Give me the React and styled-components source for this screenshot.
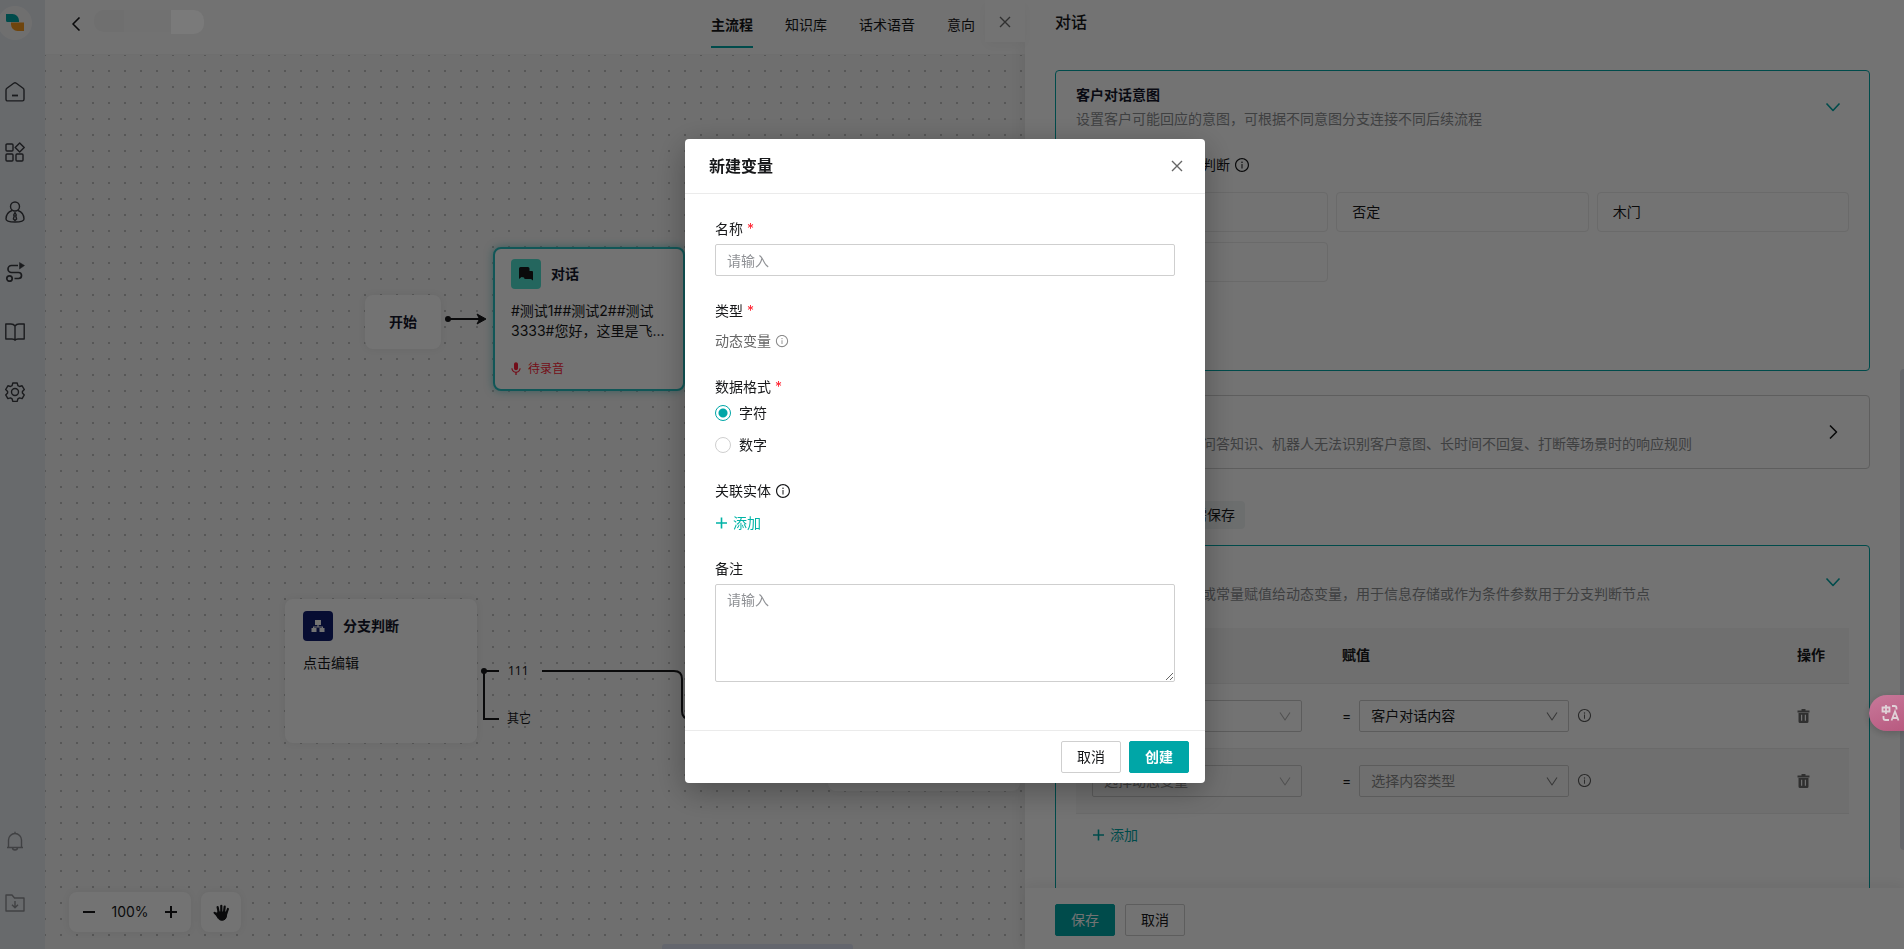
import React from "react";
import styled, { createGlobalStyle } from "styled-components";
import { AiOutlineInfoCircle } from "react-icons/ai";
import { MdMic } from "react-icons/md";

const TEAL = "#00a6a7";

const GlobalStyle = createGlobalStyle`
  *, *::before, *::after { box-sizing: border-box; }
  html, body { margin: 0; height: 100%; overflow: hidden; }
  body, button, input, select, textarea {
    font-family: Inter, "Noto Sans CJK SC", sans-serif;
    font-size: 14px;
    line-height: 20px;
    color: #17181a;
  }
  h1, h2, h3, p { margin: 0; font-size: 14px; }
  button { cursor: pointer; }
  svg { display: block; flex: none; }
`;

const Page = styled.div`
  display: flex;
  height: 100vh;
  background: #f5f5f5;
`;

/* ---------- side navigation ---------- */

const Sidebar = styled.nav`
  flex: none;
  width: 45px;
  display: flex;
  flex-direction: column;
  justify-content: space-between;
  padding: 6px 0 36px;
  background: #e6eaf0;
`;

const Logo = styled.a`
  display: flex;
  align-items: center;
  justify-content: center;
  width: 34px;
  height: 34px;
  margin-left: -2px;
  margin-bottom: 42px;
  border-radius: 50%;
  background: #f7f7f7;
`;

const NavGroup = styled.div`
  display: flex;
  flex-direction: column;
  gap: ${(p) => p.$gap}px;
`;

const NavLink = styled.a`
  display: flex;
  width: 30px;
  height: 20px;
  align-items: center;
  justify-content: center;
  color: ${(p) => (p.$muted ? "#8e9094" : "#3b3d42")};
`;

/* ---------- work area ---------- */

const Main = styled.main`
  flex: 1;
  min-width: 0;
  display: flex;
  flex-direction: column;
`;

const TopBar = styled.header`
  display: flex;
  justify-content: space-between;
  height: 55px;
  padding: 0 50px 0 25px;
  background: #fdfdfd;
  border-bottom: 1px solid #f3f3f3;
`;

const TopLeft = styled.div`
  display: flex;
  align-items: center;
  gap: 10px;
  height: 48px;
`;

const IconButton = styled.button`
  display: flex;
  align-items: center;
  justify-content: center;
  width: ${(p) => p.$size}px;
  height: ${(p) => p.$size}px;
  padding: 0;
  border: 0;
  background: none;
  color: inherit;
`;

const TitleSkeleton = styled.div`
  display: flex;
  width: 110px;
  height: 22px;
  margin-bottom: 6px;
  border-radius: 10px;
  overflow: hidden;
  background: #fafafa;
`;

const SkeletonPart = styled.span`
  width: ${(p) => p.$width}px;
  background: ${(p) => p.$color};
`;

const SkeletonEnd = styled.span`
  position: relative;
  z-index: 30;
  width: 33px;
  height: 24px;
  margin: 0 0 4px -43px;
  border-radius: 0 10px 10px 0;
  background: #7a7a7a;
`;

const Tabs = styled.nav`
  display: flex;
  gap: 32px;
`;

const Tab = styled.a`
  height: 48px;
  padding-top: 15px;
  color: #17181a;
  text-decoration: none;
  white-space: nowrap;
  font-weight: ${(p) => (p.$active ? 700 : 400)};
  border-bottom: 2px solid ${(p) => (p.$active ? TEAL : "transparent")};
`;

const Canvas = styled.section`
  position: relative;
  flex: 1;
  overflow: hidden;
  background-color: #f5f5f5;
  background-image: conic-gradient(from 90deg at 14px 14px, #c0c0c0 25%, transparent 0);
  background-size: 16px 16px;
  background-position: 1px 1px;
`;

const Wires = styled.svg`
  position: absolute;
  left: 0;
  top: 0;
`;

const Node = styled.article`
  position: absolute;
  left: ${(p) => p.$x}px;
  top: ${(p) => p.$y}px;
  width: ${(p) => p.$w || 192}px;
  height: ${(p) => p.$h || 144}px;
  padding: ${(p) => (p.$selected ? 10 : 12)}px ${(p) => (p.$selected ? 16 : 18)}px;
  border: ${(p) => (p.$selected ? "2px solid #27bfc0" : "0")};
  border-radius: 8px;
  background: #fff;
  box-shadow: ${(p) => (p.$selected ? "0 0 8px rgba(0, 166, 167, 0.5)" : "0 0 8px rgba(0, 0, 0, 0.06)")};
`;

const StartNode = styled(Node)`
  display: flex;
  align-items: center;
  justify-content: center;
  font-weight: 700;
  color: #16182b;
`;

const NodeHead = styled.div`
  display: flex;
  align-items: center;
  gap: 10px;
  margin-bottom: 12px;
  font-weight: 700;
  color: #16182b;
`;

const NodeIcon = styled.span`
  display: flex;
  align-items: center;
  justify-content: center;
  width: 30px;
  height: 30px;
  border-radius: 4px;
  background: ${(p) => p.$color};
`;

const NodeStatus = styled.div`
  display: flex;
  align-items: center;
  gap: 4px;
  margin-top: 18px;
  margin-left: -3px;
  font-size: 12px;
  color: #ff1f3a;
`;

const BranchLabel = styled.span`
  position: absolute;
  left: ${(p) => p.$x}px;
  top: ${(p) => p.$y}px;
  font-family: "Noto Sans", "Noto Sans CJK SC", sans-serif;
  font-size: 12px;
`;

const ZoomTools = styled.div`
  position: absolute;
  left: 24px;
  bottom: 17px;
  display: flex;
  gap: 10px;
`;

const ToolCard = styled.div`
  display: flex;
  align-items: center;
  justify-content: space-between;
  height: 40px;
  width: ${(p) => p.$width}px;
  padding: 0 10px;
  border-radius: 8px;
  background: #fff;
  box-shadow: 0 0 8px rgba(0, 0, 0, 0.06);
`;

const CanvasScroll = styled.div`
  position: absolute;
  left: 63%;
  bottom: 0;
  width: 191px;
  height: 5px;
  border-radius: 3px 3px 0 0;
  background: #dde2f2;
`;

/* ---------- drawer ---------- */

const Drawer = styled.aside`
  position: relative;
  flex: none;
  width: 879px;
  display: flex;
  flex-direction: column;
  background: #fff;
  box-shadow: -4px 0 12px rgba(0, 0, 0, 0.05);
`;

const DrawerClose = styled.button`
  position: absolute;
  left: -40px;
  top: 0;
  display: flex;
  align-items: center;
  justify-content: center;
  width: 40px;
  height: 42px;
  padding: 2px 0 0;
  border: 0;
  background: #fff;
  color: #6b6b6b;
  box-shadow: 0 4px 12px rgba(0, 0, 0, 0.04);
`;

const DrawerTitle = styled.h2`
  padding: 10px 30px 0;
  font-size: 16px;
  line-height: 24px;
  font-weight: 500;
`;

const DrawerBody = styled.div`
  flex: 1;
  min-height: 0;
  overflow: hidden;
  padding: 36px 34px 0 30px;
`;

const DrawerFooter = styled.footer`
  position: relative;
  display: flex;
  gap: 10px;
  padding: 16px 30px 13px;
  background: #fff;
  box-shadow: 0 -4px 12px rgba(0, 0, 0, 0.06);
`;

const DrawerScroll = styled.div`
  position: absolute;
  right: 0;
  top: 369px;
  width: 4px;
  height: 481px;
  border-radius: 4px 0 0 4px;
  background: #dde2ea;
`;

const Card = styled.section`
  padding: 14px 20px ${(p) => p.$bottom}px;
  border: 1px solid ${(p) => (p.$open ? TEAL : "#d0d0d0")};
  border-radius: 4px;
`;

const CardHead = styled.header`
  display: flex;
  align-items: center;
  justify-content: space-between;
  padding-right: 4px;
  color: ${(p) => (p.$open ? TEAL : "#17181a")};
`;

const CardTitle = styled.h3`
  margin-bottom: 4px;
  color: #16182b;
`;

const CardText = styled.p`
  color: #8c8e91;
`;

const Judge = styled.div`
  display: flex;
  align-items: center;
  gap: 4px;
  margin: 25px 0 16px;
  line-height: 22px;
`;

const IntentGrid = styled.div`
  display: grid;
  grid-template-columns: repeat(3, 1fr);
  gap: 10px 8px;
`;

const Intent = styled.div`
  height: 40px;
  padding: 9px 15px;
  border: 1px solid #eaeaea;
  border-radius: 4px;
`;

const SectionGap = styled.div`
  height: 24px;
`;

const SectionBar = styled.div`
  display: flex;
  align-items: center;
  gap: 16px;
  margin: 32px 0 16px;
`;

const Tag = styled.span`
  padding: 4px 10px;
  border-radius: 4px;
  background: #f0f4f4;
`;

const Table = styled.table`
  width: 100%;
  margin-top: 24px;
  border-collapse: collapse;
  table-layout: fixed;
  text-align: left;

  th, td {
    padding: 0 16px;
    border-bottom: 1px solid #ececec;
  }
  th { height: 55px; background: #f5f5f5; }
  td { height: 65px; }
  tbody tr:nth-child(even) { background: #f7f7f7; }
`;

const Column = styled.col`
  width: ${(p) => p.$width};
`;

const Assign = styled.div`
  display: flex;
  align-items: center;
  gap: 8px;
`;

const SelectWrap = styled.span`
  position: relative;
  display: inline-flex;
  align-items: center;
  width: 210px;
  color: ${(p) => (p.$soft ? "#b4b4b4" : "#7c7c7c")};

  svg { position: absolute; right: 11px; pointer-events: none; }
`;

const Select = styled.select`
  appearance: none;
  width: 100%;
  height: 32px;
  padding: 0 11px;
  border: 1px solid #cdcdcd;
  border-radius: 2px;
  background: transparent;
  color: ${(p) => (p.$empty ? "#8a8a8a" : "#17181a")};
`;

const InfoIcon = styled(AiOutlineInfoCircle)`
  width: ${(p) => p.$size || 16}px;
  height: ${(p) => p.$size || 16}px;
  color: ${(p) => p.$color || "#17181a"};
`;

const AddButton = styled.button`
  display: flex;
  align-items: center;
  gap: 6px;
  padding: 0;
  border: 0;
  background: none;
  color: ${(p) => p.$color || TEAL};
  margin: ${(p) => p.$margin || 0};
  line-height: 22px;
`;

const Button = styled.button`
  width: 60px;
  height: 32px;
  padding: 0;
  border: 1px solid ${(p) => (p.$primary ? TEAL : "#cfcfcf")};
  border-radius: 2px;
  background: ${(p) => (p.$primary ? TEAL : "#fff")};
  color: ${(p) => (p.$primary ? "#fff" : "#17181a")};
  font-weight: ${(p) => (p.$strong ? 700 : 400)};
`;

/* ---------- modal ---------- */

const Overlay = styled.div`
  position: fixed;
  inset: 0;
  z-index: 20;
  display: flex;
  justify-content: center;
  align-items: center;
  padding: 0 14px 27px 0;
  background: rgba(0, 0, 0, 0.55);
`;

const Modal = styled.form`
  width: 520px;
  border-radius: 4px;
  background: #fff;
  box-shadow: 0 8px 32px rgba(0, 0, 0, 0.3);
`;

const ModalHead = styled.header`
  display: flex;
  align-items: center;
  justify-content: space-between;
  height: 55px;
  padding: 0 18px 0 24px;
  border-bottom: 1px solid #ebebeb;
  color: #666;
`;

const ModalTitle = styled.h2`
  font-size: 16px;
  color: #17181a;
`;

const ModalBody = styled.div`
  display: flex;
  flex-direction: column;
  gap: 24px;
  padding: 24px 30px 48px;
  line-height: 22px;
`;

const Field = styled.fieldset`
  display: flex;
  flex-direction: column;
  margin: 0;
  padding: 0;
  border: 0;
  min-width: 0;
`;

const Label = styled.label`
  display: flex;
  align-items: center;
  gap: 4px;
  margin-bottom: ${(p) => p.$gap || 4}px;
  line-height: 22px;
`;

const Required = styled.span`
  color: #ff1f2d;
`;

const TextInput = styled.input`
  height: 32px;
  padding: 0 11px;
  border: 1px solid #cfcfcf;
  border-radius: 2px;
  &::placeholder { color: #8f9195; opacity: 1; }
`;

const TextArea = styled.textarea`
  height: 98px;
  padding: 5px 11px;
  border: 1px solid #cfcfcf;
  border-radius: 2px;
  resize: vertical;
  &::placeholder { color: #8f9195; opacity: 1; }
`;

const StaticValue = styled.div`
  display: flex;
  align-items: center;
  gap: 4px;
  color: #666;
`;

const RadioLabel = styled.label`
  display: flex;
  align-items: center;
  gap: 8px;
  & + & { margin-top: 10px; }
`;

const Radio = styled.input`
  appearance: none;
  width: 16px;
  height: 16px;
  margin: 0;
  border: 1px solid #cfcfcf;
  border-radius: 50%;
  background: #fff;
  &:checked {
    border-color: ${TEAL};
    background: radial-gradient(circle, ${TEAL} 4px, #fff 5px);
  }
`;

const ModalFooter = styled.footer`
  display: flex;
  justify-content: flex-end;
  gap: 8px;
  padding: 10px 16px;
  border-top: 1px solid #ebebeb;
`;

const TranslateTab = styled.button`
  position: fixed;
  right: 0;
  top: 695px;
  z-index: 30;
  display: flex;
  align-items: center;
  width: 35px;
  height: 36px;
  padding: 0 0 0 12px;
  border: 0;
  border-radius: 18px 0 0 18px;
  background: linear-gradient(160deg, #c8799a, #b85a80);
  box-shadow: 0 2px 8px rgba(0, 0, 0, 0.2);
  color: #e0d2d8;
`;

/* ---------- icons ---------- */

const Stroke = ({ size = 20, width = 1.4, view = 20, children }) => (
  <svg width={size} height={size} viewBox={`0 0 ${view} ${view}`} fill="none" stroke="currentColor" strokeWidth={width} strokeLinejoin="round" aria-hidden="true">
    {children}
  </svg>
);

const CloseIcon = () => (
  <Stroke size={12} view={12} width={1.4}><path d="M1 1l10 10M11 1L1 11" /></Stroke>
);
const ChevronDown = () => (
  <Stroke size={16} view={16} width={1.6}><path d="M1.500 4.500L8 11.500l6.500-7" /></Stroke>
);
const SelectArrow = () => (
  <Stroke size={12} view={12} width={1.1}><path d="M1 2.500L6 10l5-7.500" /></Stroke>
);
const ChevronRight = () => (
  <Stroke size={16} view={16} width={1.6}><path d="M5 1.500L11.500 8 5 14.500" /></Stroke>
);
const BackIcon = () => (
  <Stroke size={14} view={14} width={1.6}><path d="M9.500 0.500L3 7l6.500 6.500" /></Stroke>
);
const PlusIcon = () => (
  <Stroke size={12} view={12} width={1.6}><path d="M6.500 0.500v11M1 6h11" /></Stroke>
);
const TrashIcon = () => (
  <svg width="14" height="14" viewBox="0 0 14 14" aria-hidden="true">
    <path fill="#6c6c6c" fillRule="evenodd" d="M4.500 0h4v1.500h4V3.500h-12V1.500h4zM1.500 4h10v8.500a1.500 1.500 0 0 1-1.500 1.500H3A1.500 1.500 0 0 1 1.500 12.500zm2.500 1.800v6h1.200v-6zm3.800 0v6H9v-6z" />
  </svg>
);
const HandIcon = () => (
  <svg width="17" height="17" viewBox="0 0 17 17" fill="none" stroke="#17181a" strokeLinecap="round" aria-hidden="true">
    <path strokeWidth="2.200" d="M5.800 9L4.600 3M8.300 8.500V1.800M11 8.500l.7-6M13 10.500l1.900-5.500M4.800 12L1.600 8.800" />
    <path fill="#17181a" strokeWidth="1" strokeLinejoin="round" d="M4.800 8h8.900l-.2 4c-.3 2.800-2 4.300-4.600 4.300-2.100 0-3.500-1-4.500-3.300L3 10.500z" />
  </svg>
);

const NAV = [
  ["首页", <Stroke><path d="M1 8.200c0-.8.300-1.400.9-1.900L8.700 1.300a2.200 2.200 0 0 1 2.600 0l6.800 5c.6.500.9 1.100.9 1.900v9.100c0 .9-.7 1.600-1.600 1.600H2.600c-.9 0-1.600-.7-1.600-1.600z" /><path d="M7 13.500h6" strokeWidth="1.800" /></Stroke>],
  ["应用", <Stroke><rect x="1" y="2" width="7" height="7" rx="1" /><rect x="1" y="12" width="7" height="7" rx="1" /><rect x="11" y="12" width="7" height="7" rx="1" /><path d="M14.700 1l4.500 4.500-4.500 4.500-4.500-4.500z" /></Stroke>],
  ["客户", <Stroke size={22} view={22}><circle cx="11" cy="5.500" r="4.500" /><path d="M8 9.500C4 11 2 14 2 18c0 2 1.500 3 9 3s9-1 9-3c0-4-2-7-6-8.500" /><path d="M11 11.500l1.300 2.500-.6.800.9 3.200-1.600 1.500-1.600-1.500.9-3.200-.6-.8z" /></Stroke>],
  ["流程", <Stroke width={1.7}><circle cx="4.500" cy="16.500" r="2.700" /><path d="M13 3.500H6.500a3.500 3.500 0 0 0 0 7h7a3 3 0 0 1 0 6H9.500" /><path d="M14.500.5l5 3-5 3.500z" fill="currentColor" strokeWidth=".5" /></Stroke>],
  ["知识库", <Stroke><path d="M10 4C9 2.500 7.500 2 6 2H.800v15H7c1.500 0 2.500.3 3 1.300.5-1 1.500-1.300 3-1.300h6.200V2H14c-1.500 0-3 .5-4 2zM10 4v13.500" /></Stroke>],
  ["设置", <Stroke><circle cx="10" cy="10" r="3.500" /><path d="M7.800 1h4.400l.7 2.600 1.600.9 2.600-.7 2.200 3.700-1.900 1.900v1.600l1.900 1.900-2.200 3.700-2.600-.7-1.600.9-.7 2.600H7.800l-.7-2.600-1.600-.9-2.600.7L.7 12.900 2.600 11V9.400L.7 7.500l2.200-3.700 2.600.7 1.600-.9z" /></Stroke>],
];

const NAV_BOTTOM = [
  ["通知", <Stroke><path d="M2 16.500h16M3.500 16.500V9a6.500 6.500 0 0 1 13 0v7.500M10 2.500V.7M7.500 16.500a2.500 2.500 0 0 0 5 0" /></Stroke>],
  ["下载", <Stroke><path d="M1 2h6l2.500 3H19v13H1zM10 8v6.500M7 11.800l3 3 3-3" /></Stroke>],
];

const ROWS = [
  { target: "客户意向", source: "客户对话内容" },
  { target: "选择动态变量", targetEmpty: true, source: "选择内容类型", sourceEmpty: true },
];

function Dropdown({ value, empty, label, soft }) {
  return (
    <SelectWrap $soft={soft}>
      <Select aria-label={label} $empty={empty} defaultValue={value}>
        <option>{value}</option>
      </Select>
      <SelectArrow />
    </SelectWrap>
  );
}

function SettingCard({ title, text, open, bottom, children }) {
  return (
    <Card $open={open} $bottom={bottom}>
      <CardHead $open={open}>
        <div>
          <CardTitle>{title}</CardTitle>
          <CardText>{text}</CardText>
        </div>
        <IconButton type="button" $size={24} aria-label={open ? "收起" : "展开"}>
          {open ? <ChevronDown /> : <ChevronRight />}
        </IconButton>
      </CardHead>
      {children}
    </Card>
  );
}

function FlowCanvas() {
  return (
    <Canvas>
      <Wires width="980" height="894" fill="none" stroke="#17181a" strokeWidth="2" aria-hidden="true">
        <circle cx="403" cy="264" r="3" fill="#17181a" stroke="none" />
        <path d="M403 264h36" />
        <path d="M441 264l-9-5 2.500 5-2.500 5z" fill="#17181a" strokeLinejoin="round" strokeWidth="1" />
        <circle cx="439" cy="616" r="3" fill="#17181a" stroke="none" />
        <path d="M454 616h-15v48h15" />
        <path d="M497 616h132q8 0 8 8v32q0 8 8 8h138" />
      </Wires>
      <StartNode $x={320} $y={240} $w={76} $h={54}>开始</StartNode>
      <Node $x={448} $y={192} $selected>
        <NodeHead>
          <NodeIcon $color="#50e3d0">
            <svg width="16" height="14" viewBox="0 0 16 14" fill="#17181a" aria-hidden="true">
              <path d="M2.500 0H10a1.500 1.500 0 0 1 1.500 1.500V4H14a1 1 0 0 1 1 1v8.500L13 12H7.500A1.500 1.500 0 0 1 6 10.500L3.500 10 1 12V1.500A1.500 1.500 0 0 1 2.500 0z" />
            </svg>
          </NodeIcon>
          对话
        </NodeHead>
        <p>#测试1##测试2##测试<br />3333#您好，这里是飞...</p>
        <NodeStatus><MdMic size={16} />待录音</NodeStatus>
      </Node>
      <Node $x={240} $y={544}>
        <NodeHead>
          <NodeIcon $color="#101d70">
            <svg width="14" height="14" viewBox="0 0 14 14" fill="#fff" aria-hidden="true">
              <path d="M4 1h6v5H7.600v1.500H12V9h1.500v4H8.500V9h2.300v-.4H3.200V9h2.300v4h-5V9H2V7.500h4.400V6H4z" />
            </svg>
          </NodeIcon>
          分支判断
        </NodeHead>
        <p>点击编辑</p>
      </Node>
      <BranchLabel $x={463} $y={606}>111</BranchLabel>
      <BranchLabel $x={462} $y={654}>其它</BranchLabel>
      <Node $x={783} $y={592} />
      <ZoomTools>
        <ToolCard $width={122}>
          <IconButton type="button" $size={20} aria-label="缩小"><Stroke size={12} view={12} width={2}><path d="M0 6h12" /></Stroke></IconButton>
          <span>100%</span>
          <IconButton type="button" $size={20} aria-label="放大"><Stroke size={12} view={12} width={2}><path d="M0 6h12M6 0v12" /></Stroke></IconButton>
        </ToolCard>
        <ToolCard $width={40}>
          <IconButton type="button" $size={20} aria-label="拖动画布"><HandIcon /></IconButton>
        </ToolCard>
      </ZoomTools>
      <CanvasScroll />
    </Canvas>
  );
}

function DialogDrawer() {
  return (
    <Drawer>
      <DrawerClose type="button" aria-label="关闭"><CloseIcon /></DrawerClose>
      <DrawerTitle>对话</DrawerTitle>
      <DrawerBody>
        <SettingCard title="客户对话意图" text="设置客户可能回应的意图，可根据不同意图分支连接不同后续流程" open bottom={88}>
          <Judge>根据客户回答做意图判断<InfoIcon /></Judge>
          <IntentGrid>
            <Intent>肯定</Intent>
            <Intent>否定</Intent>
            <Intent>木门</Intent>
            <Intent>其它</Intent>
          </IntentGrid>
        </SettingCard>
        <SectionGap />
        <SettingCard title="知识与规则" text="设置节点内客户命中问答知识、机器人无法识别客户意图、长时间不回复、打断等场景时的响应规则" bottom={14} />
        <SectionBar>
          <h3>节点后动作</h3>
          <Tag>修改后需保存</Tag>
        </SectionBar>
        <SettingCard title="变量赋值" text="可将客户回复的内容或常量赋值给动态变量，用于信息存储或作为条件参数用于分支判断节点" open bottom={88}>
          <Table>
            <colgroup>
              <Column $width="250px" />
              <Column $width="auto" />
              <Column $width="68px" />
            </colgroup>
            <thead>
              <tr><th>动态变量</th><th>赋值</th><th>操作</th></tr>
            </thead>
            <tbody>
              {ROWS.map((row) => (
                <tr key={row.source}>
                  <td><Dropdown label="动态变量" value={row.target} empty={row.targetEmpty} soft /></td>
                  <td>
                    <Assign>
                      <span>=</span>
                      <Dropdown label="赋值" value={row.source} empty={row.sourceEmpty} />
                      <InfoIcon $size={15} $color="#5c5c5c" />
                    </Assign>
                  </td>
                  <td><IconButton type="button" $size={14} aria-label="删除"><TrashIcon /></IconButton></td>
                </tr>
              ))}
            </tbody>
          </Table>
          <AddButton type="button" $margin="10px 16px"><PlusIcon />添加</AddButton>
        </SettingCard>
      </DrawerBody>
      <DrawerScroll />
      <DrawerFooter>
        <Button type="button" $primary>保存</Button>
        <Button type="button">取消</Button>
      </DrawerFooter>
    </Drawer>
  );
}

function VariableModal() {
  return (
    <Overlay>
      <Modal role="dialog" aria-labelledby="modal-title" onSubmit={(e) => e.preventDefault()}>
        <ModalHead>
          <ModalTitle id="modal-title">新建变量</ModalTitle>
          <IconButton type="button" $size={20} aria-label="关闭"><CloseIcon /></IconButton>
        </ModalHead>
        <ModalBody>
          <Field>
            <Label htmlFor="name">名称<Required>*</Required></Label>
            <TextInput id="name" placeholder="请输入" />
          </Field>
          <Field>
            <Label as="span" $gap={8}>类型<Required>*</Required></Label>
            <StaticValue>动态变量<InfoIcon $size={14} $color="#8a8a8a" /></StaticValue>
          </Field>
          <Field role="radiogroup" aria-label="数据格式">
            <Label as="span">数据格式<Required>*</Required></Label>
            <RadioLabel><Radio type="radio" name="format" defaultChecked />字符</RadioLabel>
            <RadioLabel><Radio type="radio" name="format" />数字</RadioLabel>
          </Field>
          <Field>
            <Label as="span" $gap={10}>关联实体<InfoIcon /></Label>
            <AddButton type="button" $color="#00b3a6"><PlusIcon />添加</AddButton>
          </Field>
          <Field>
            <Label htmlFor="remark">备注</Label>
            <TextArea id="remark" placeholder="请输入" />
          </Field>
        </ModalBody>
        <ModalFooter>
          <Button type="button">取消</Button>
          <Button type="submit" $primary $strong>创建</Button>
        </ModalFooter>
      </Modal>
    </Overlay>
  );
}

export default function App() {
  return (
    <>
      <GlobalStyle />
      <Page>
        <Sidebar>
          <NavGroup $gap={0}>
            <Logo href="#" aria-label="主页">
              <svg width="20" height="20" viewBox="0 0 20 20" aria-hidden="true">
                <path fill={TEAL} d="M1 1h6.500A6.500 6.500 0 0 1 14 7.500V9H2.500A1.500 1.500 0 0 1 1 7.500z" />
                <path fill="#f79a1e" d="M6 9.500h13V18h-6.500A6.500 6.500 0 0 1 6 11.500z" />
              </svg>
            </Logo>
            <NavGroup $gap={40}>
              {NAV.map(([name, icon]) => <NavLink key={name} href="#" aria-label={name}>{icon}</NavLink>)}
            </NavGroup>
          </NavGroup>
          <NavGroup $gap={42}>
            {NAV_BOTTOM.map(([name, icon]) => <NavLink key={name} href="#" aria-label={name} $muted>{icon}</NavLink>)}
          </NavGroup>
        </Sidebar>
        <Main>
          <TopBar>
            <TopLeft>
              <IconButton type="button" $size={14} aria-label="返回"><BackIcon /></IconButton>
              <TitleSkeleton>
                <SkeletonPart $width={30} $color="#f6f6f6" />
              </TitleSkeleton>
              <SkeletonEnd />
            </TopLeft>
            <Tabs>
              <Tab href="#" $active>主流程</Tab>
              <Tab href="#">知识库</Tab>
              <Tab href="#">话术语音</Tab>
              <Tab href="#">意向</Tab>
            </Tabs>
          </TopBar>
          <FlowCanvas />
        </Main>
        <DialogDrawer />
      </Page>
      <VariableModal />
      <TranslateTab type="button" aria-label="翻译">
        <svg width="19" height="18" viewBox="0 0 19 18" fill="none" stroke="currentColor" strokeWidth="1.800" aria-hidden="true">
          <path d="M1.500 3.500h7v4h-7zM5 1v9M11 2h2.500a2 2 0 0 1 2 2v1.500M2.500 12v2a2 2 0 0 0 2 2H8M10.500 16.500l3.500-9 3.500 9M11.500 14h5" />
        </svg>
      </TranslateTab>
    </>
  );
}
